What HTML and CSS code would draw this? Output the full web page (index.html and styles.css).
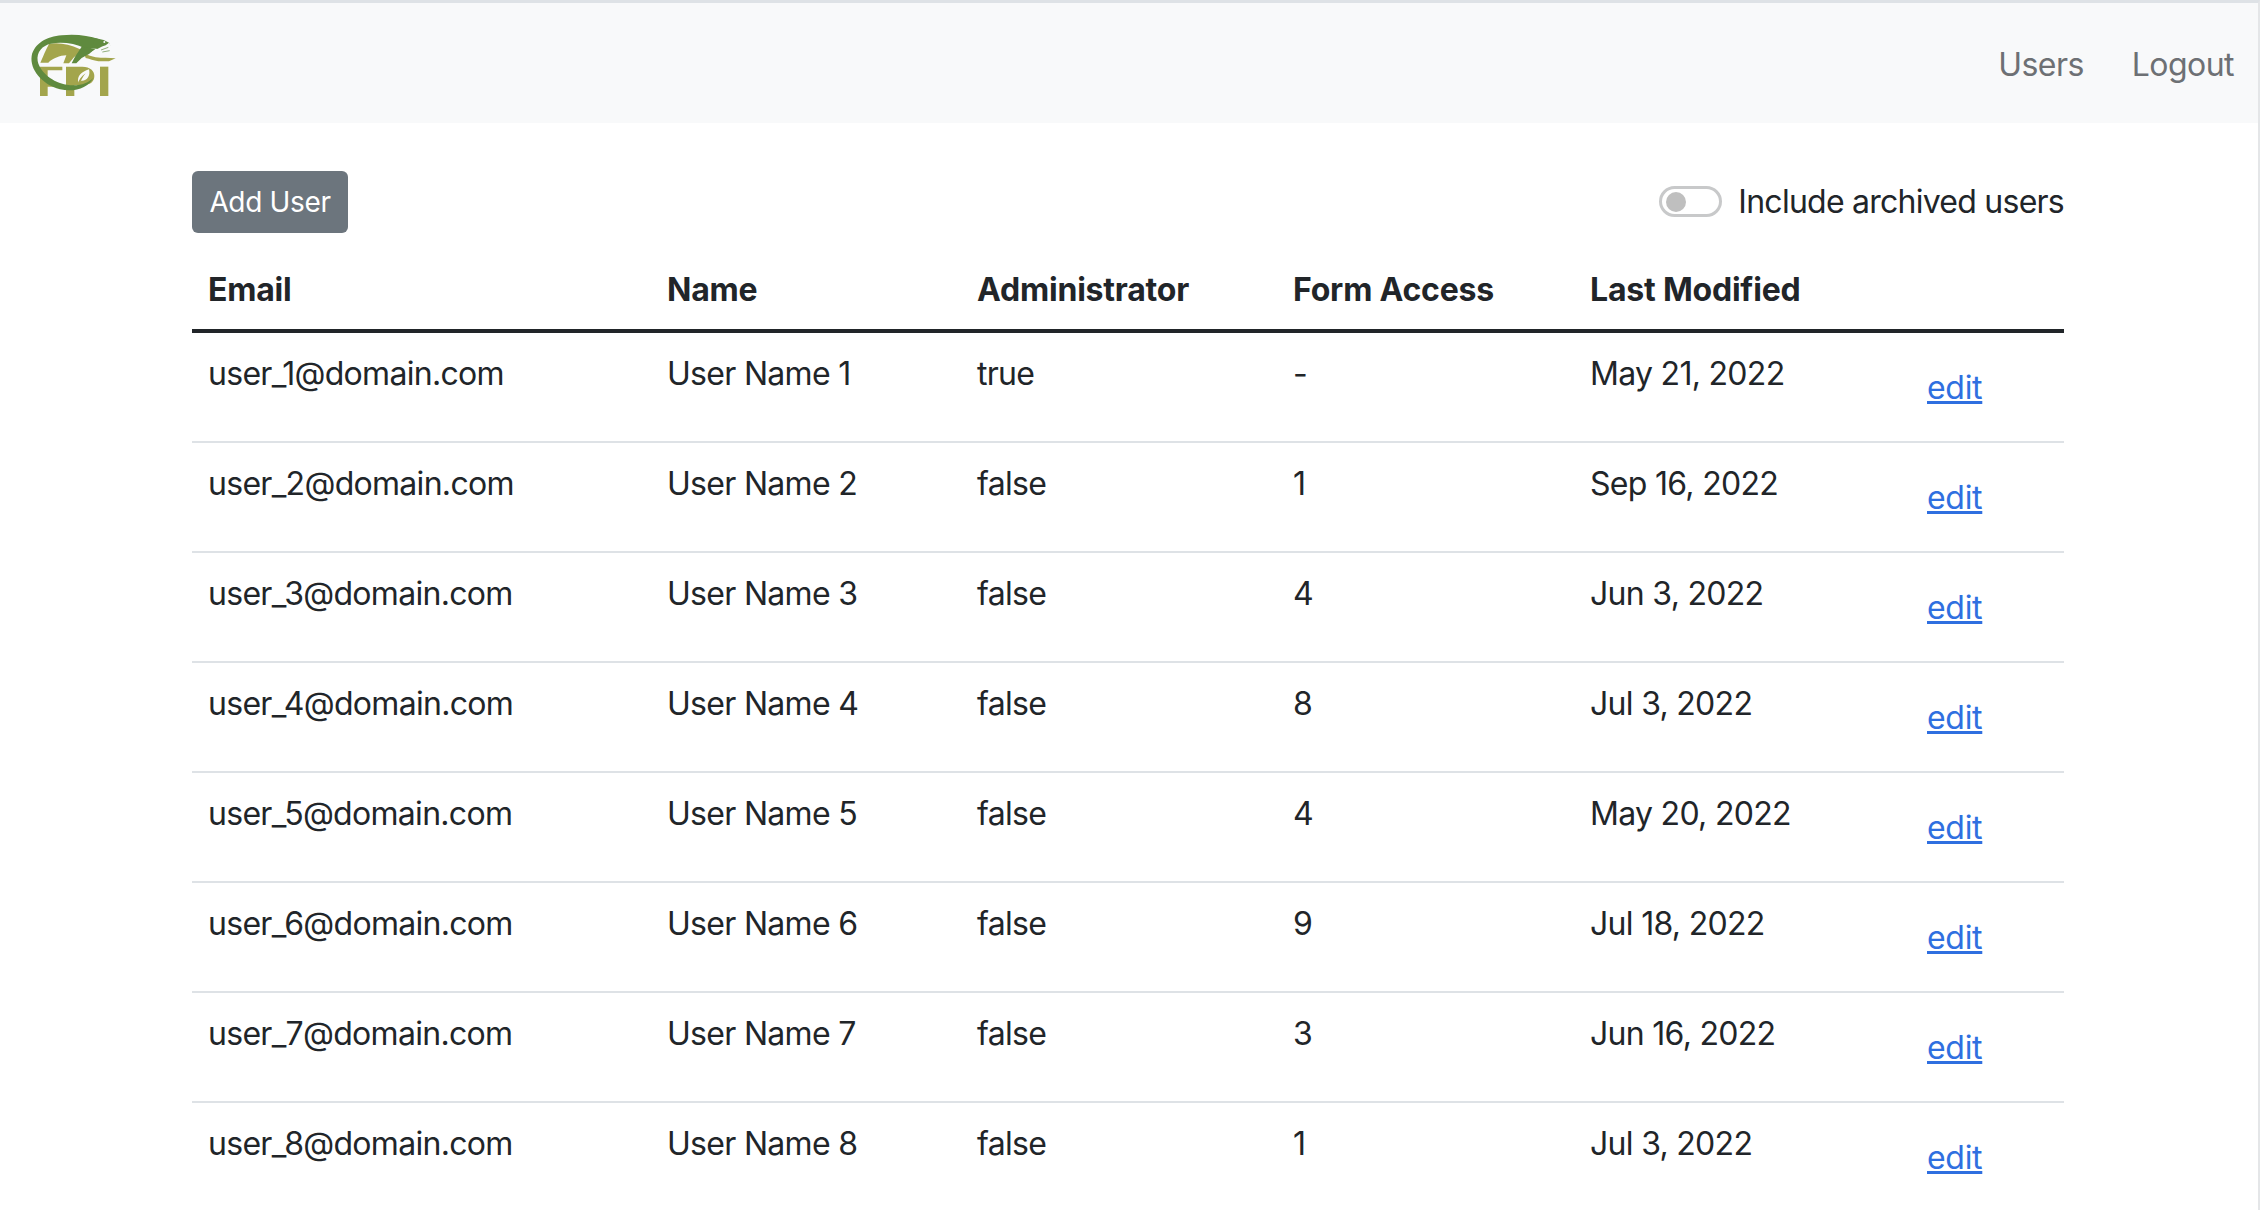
FILE: index.html
```html
<!DOCTYPE html>
<html lang="en">
<head>
<meta charset="utf-8">
<title>Users</title>
<link rel="stylesheet" href="styles.css">
</head>
<body>
<div class="frame">
<nav class="navbar">
  <svg class="logo" width="100" height="75" viewBox="0 0 300 225" role="img" aria-label="FPI logo">
    <path class="olive" d="M45 122H112V133H68V172H95V182H68V210H45Z"/>
    <path class="olive" d="M123 122H172C196 122 208 135 208 150C208 166 196 178 172 178H148V210H123Z"/>
    <rect class="olive" x="225" y="122" width="25" height="88"/>
    <path class="white" d="M160 170C155 150 170 137 192 130C197 150 186 166 168 164Z"/>
    <path class="olive" d="M157 178C160 162 170 150 182 142C174 152 167 164 163 178Z"/>
    <path class="olive" d="M72 54C100 48 135 56 162 68L184 78C168 80 154 86 147 94L132 112H115L124 88C105 88 82 98 70 110H46C55 90 63 70 72 54Z"/>
    <path class="olive" d="M178 84C190 86 200 92 212 94C232 97 252 95 272 97L252 106H220C205 104 195 98 182 96Z"/>
    <path class="green" d="M222 40C190 28 150 24 110 28C65 32 28 52 20 90C14 130 50 175 105 190C150 200 190 185 205 155C190 172 160 182 125 176C85 170 45 140 38 105C34 78 52 58 78 53C110 47 150 52 178 66L205 66L240 50Z"/>
    <path class="green" d="M170 62L212 68L192 84L170 96L154 112H140L150 92Z"/>
    <path class="green" d="M210 36L236 42L252 50L256 60L222 70L200 66Z"/>
    <path class="white" d="M196 80C212 72 228 62 242 58L252 50L259 62L258 76L246 84L232 79L214 84L224 76L208 78Z"/>
    <path class="dark" d="M228 72L250 64M232 78L254 74"/>
    <circle class="white" cx="238" cy="48" r="3"/>
  </svg>
  <div class="nav-links"><a href="#">Users</a><a href="#">Logout</a></div>
</nav>
<main class="content">
  <div class="toolbar">
    <button class="btn" type="button">Add User</button>
    <label class="switch"><span class="track"><span class="thumb"></span></span><span>Include archived users</span></label>
  </div>
  <table class="users">
    <colgroup><col class="c1"><col class="c2"><col class="c3"><col class="c4"><col class="c5"><col class="c6"></colgroup>
    <thead><tr><th>Email</th><th>Name</th><th>Administrator</th><th>Form Access</th><th>Last Modified</th><th></th></tr></thead>
    <tbody>
      <tr><td>user_1@domain.com</td><td>User Name 1</td><td>true</td><td>-</td><td>May 21, 2022</td><td class="act"><a href="#">edit</a></td></tr>
      <tr><td>user_2@domain.com</td><td>User Name 2</td><td>false</td><td>1</td><td>Sep 16, 2022</td><td class="act"><a href="#">edit</a></td></tr>
      <tr><td>user_3@domain.com</td><td>User Name 3</td><td>false</td><td>4</td><td>Jun 3, 2022</td><td class="act"><a href="#">edit</a></td></tr>
      <tr><td>user_4@domain.com</td><td>User Name 4</td><td>false</td><td>8</td><td>Jul 3, 2022</td><td class="act"><a href="#">edit</a></td></tr>
      <tr><td>user_5@domain.com</td><td>User Name 5</td><td>false</td><td>4</td><td>May 20, 2022</td><td class="act"><a href="#">edit</a></td></tr>
      <tr><td>user_6@domain.com</td><td>User Name 6</td><td>false</td><td>9</td><td>Jul 18, 2022</td><td class="act"><a href="#">edit</a></td></tr>
      <tr><td>user_7@domain.com</td><td>User Name 7</td><td>false</td><td>3</td><td>Jun 16, 2022</td><td class="act"><a href="#">edit</a></td></tr>
      <tr><td>user_8@domain.com</td><td>User Name 8</td><td>false</td><td>1</td><td>Jul 3, 2022</td><td class="act"><a href="#">edit</a></td></tr>
    </tbody>
  </table>
</main>
</div>
</body>
</html>
```
FILE: styles.css
```css
html, body { margin: 0; height: 100%; overflow: hidden; background: #fff; }
body { font-family: Inter, "Liberation Sans", sans-serif; font-size: 32px; color: #212529; letter-spacing: -0.7px; }
.frame { height: 100%; box-sizing: border-box; border-top: 3px solid #dee2e6; border-right: 2px solid #e4e6e8; margin-right: 6px; }
.navbar { height: 120px; background: #f8f9fa; display: flex; align-items: center; justify-content: space-between; padding: 0 24px 0 25px; }
.logo { display: block; }
.olive { fill: #a3a54c; }
.green { fill: #5f8a3e; }
.white { fill: #f8f9fa; }
.dark { fill: none; stroke: #5f8a3e; stroke-width: 2; }
.nav-links { display: flex; gap: 48px; padding-top: 2px; letter-spacing: -0.55px; }
.nav-links a { color: #6d7074; text-decoration: none; }
.content { padding: 48px 194px 0 192px; }
.toolbar { display: flex; justify-content: space-between; align-items: center; }
.btn { width: 156px; height: 62px; border: 0; border-radius: 6px; background: #6c757d; color: #fff; font: inherit; font-size: 28px; letter-spacing: -0.35px; padding: 0; }
.switch { display: flex; align-items: center; gap: 16px; letter-spacing: -0.75px; margin-top: -2px; }
.track { box-sizing: border-box; width: 63px; height: 31px; border: 3px solid #c8c9ca; border-radius: 16px; padding: 3px 4px; display: block; }
.thumb { display: block; width: 20px; height: 20px; border-radius: 50%; background: #bfbfbf; }
.users { width: 1872px; table-layout: fixed; border-collapse: separate; border-spacing: 0; margin-top: 17px; }
.c1 { width: 459px; } .c2 { width: 310px; } .c3 { width: 316px; } .c4 { width: 297px; } .c5 { width: 337px; } .c6 { width: 153px; }
th { text-align: left; font-weight: 700; padding: 16px 16px 15px; line-height: 48px; letter-spacing: -0.2px; border-bottom: 4px solid #212529; }
td { padding: 17px 16px 14px; line-height: 48px; height: 110px; box-sizing: border-box; vertical-align: top; border-bottom: 2px solid #dee2e6; }
.act { padding-top: 31px; letter-spacing: -0.3px; }
.act a { color: #2f6fe0; }
```
